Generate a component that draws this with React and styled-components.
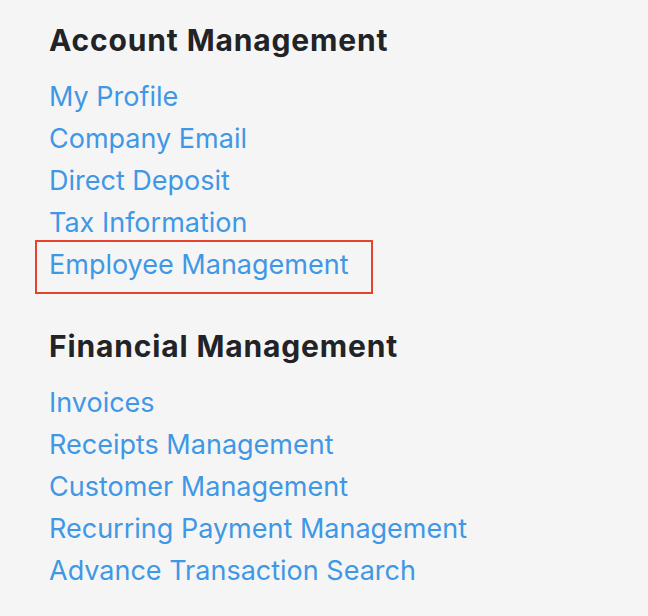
import React from "react";
import styled, { createGlobalStyle } from "styled-components";

const GlobalStyle = createGlobalStyle`
  html, body {
    margin: 0;
    background: #f5f5f5;
  }
  body {
    font-family: Inter, "Noto Sans", "Liberation Sans", sans-serif;
  }
`;

const Page = styled.div`
  padding: 22px 0 0 49px;
  display: flex;
  flex-direction: column;
  gap: 42px;
`;

const Section = styled.section`
  display: flex;
  flex-direction: column;
`;

const Heading = styled.h2`
  margin: 0 0 18px;
  font-size: 30px;
  line-height: 36px;
  letter-spacing: 0.85px;
  font-weight: 700;
  color: #212326;
`;

const LinkList = styled.ul`
  list-style: none;
  margin: 0;
  padding: 0;
`;

const Item = styled.li`
  position: relative;
  line-height: 42px;
  font-size: 27px;

  ${({ $highlighted }) =>
    $highlighted &&
    `
    &::after {
      content: "";
      position: absolute;
      left: -14px;
      top: -4px;
      width: 338px;
      bottom: -8px;
      border: 2px solid #e6432c;
      box-sizing: border-box;
      pointer-events: none;
    }
  `}
`;

const NavLink = styled.a`
  color: #3f98e6;
  text-decoration: none;
`;

const sections = [
  {
    title: "Account Management",
    links: ["My Profile", "Company Email", "Direct Deposit", "Tax Information", "Employee Management"],
    highlight: "Employee Management",
  },
  {
    title: "Financial Management",
    links: [
      "Invoices",
      "Receipts Management",
      "Customer Management",
      "Recurring Payment Management",
      "Advance Transaction Search",
    ],
  },
];

export default function App() {
  return (
    <>
      <GlobalStyle />
      <Page>
        {sections.map((s) => (
          <Section key={s.title}>
            <Heading>{s.title}</Heading>
            <LinkList>
              {s.links.map((l) => (
                <Item key={l} $highlighted={l === s.highlight}>
                  <NavLink href="#">{l}</NavLink>
                </Item>
              ))}
            </LinkList>
          </Section>
        ))}
      </Page>
    </>
  );
}
